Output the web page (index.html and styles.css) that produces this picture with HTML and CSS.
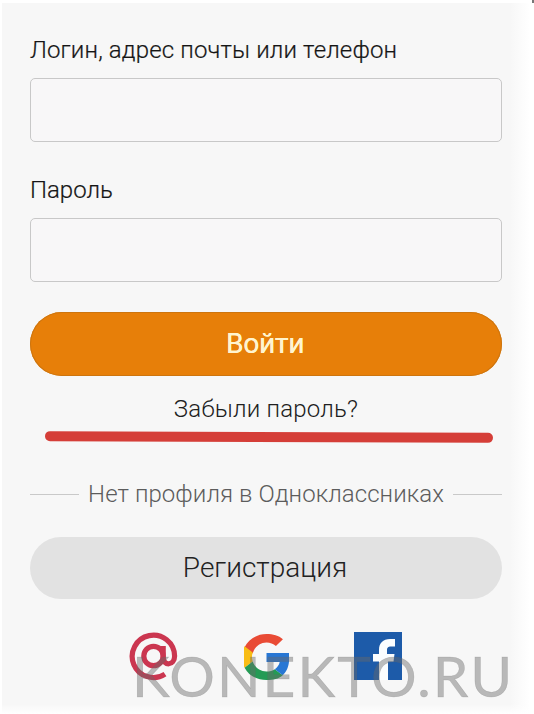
FILE: index.html
```
<!DOCTYPE html>
<html lang="ru">
<head>
<meta charset="utf-8">
<title>Вход</title>
<link rel="stylesheet" href="styles.css">
</head>
<body>
<main class="panel">
  <form class="form">
    <label class="label label-login" for="login">Логин, адрес почты или телефон</label>
    <input class="field" id="login" type="text">
    <label class="label label-password" for="password">Пароль</label>
    <input class="field" id="password" type="password">
    <button class="button button-primary" type="button"><span>Войти</span></button>
    <a class="forgot"><span>Забыли пароль?</span></a>
    <div class="underline"></div>
    <div class="divider"><span>Нет профиля в Одноклассниках</span></div>
    <button class="button button-secondary" type="button"><span>Регистрация</span></button>
  </form>
  <div class="social">
    <svg class="icon-mail" width="50" height="50" viewBox="0 0 50 50" fill="none" stroke="#cb3650" stroke-width="5.2">
      <circle cx="24.500" cy="24" r="9.7"/>
      <path d="M34.200 14V25.500C34.200 34.200 45.600 34 45.600 24A21.200 21.200 0 1 0 36 42.100"/>
    </svg>
    <svg class="icon-google" width="45" height="46" viewBox="2 1 44 46" preserveAspectRatio="none">
      <path fill="#e94b35" d="M24 9.5c3.54 0 6.71 1.22 9.21 3.6l6.85-6.85C35.9 2.38 30.47 1 24 1 14.62 1 6.51 6.38 2.56 14.22l7.98 6.19C12.43 13.72 17.74 9.5 24 9.5z"/>
      <path fill="#f8bd15" d="M10.53 28.59A14.5 14.5 0 0 1 10.53 19.41l-7.98-6.190a24 24 0 0 0 0 21.560z"/>
      <path fill="#249b55" d="M24 47c6.48 0 11.93-1.13 15.89-4.81l-7.73-6c-2.15 1.45-4.92 2.3-8.16 2.3-6.26 0-11.57-4.22-13.47-9.91l-7.98 6.19C6.51 42.62 14.62 47 24 47z"/>
      <path fill="#2877d4" d="M46 20H24v9h12.9c-.58 2.96-2.26 5.48-4.78 7.18l7.73 6C44.36 38 47 31.5 46 20z"/>
    </svg>
    <svg class="icon-facebook" width="48" height="48" viewBox="0 0 48 48">
      <path fill="#1d5ba9" d="M0 0h48v48H0z"/>
      <path fill="#fafdff" d="M25 48V29.500h-6V22h6v-4c0-7 4-11 11-11h5v7.500h-4c-3 0-4 1-4 4V22h7.500l-1 7.500H34V48z"/>
    </svg>
  </div>
  <div class="watermark">KONEKTO.RU</div>
</main>
</body>
</html>
```
FILE: styles.css
```
* { box-sizing: border-box; }
body { margin: 0; background: #fff; overflow: hidden; }
.panel {
  position: relative;
  width: 534px;
  height: 714px;
  padding: 35px 32px 0 28px;
  border-top: 3px solid #fff;
  border-left: 2px solid #fff;
  background: linear-gradient(to right, #f7f7f7 0, #f7f7f7 508px, #fff 528px);
  font-family: Roboto, "Liberation Sans", sans-serif;
  color: #151515;
}
.panel::before {
  content: "";
  position: absolute;
  right: 0; top: -3px;
  width: 2px;
  height: 3px;
  background: #777;
}
.panel::after {
  content: "";
  position: absolute;
  left: 0; right: 0; bottom: 0;
  height: 10px;
  background: linear-gradient(to bottom, transparent, #fff);
}
.form { display: flex; flex-direction: column; width: 472px; }
.label { height: 40px; line-height: 24px; font-size: 24px; font-weight: 300; white-space: nowrap; -webkit-text-stroke: .2px #151515; }
.label-login { letter-spacing: .14px; }
.label-password { margin-top: 36px; }
.field {
  width: 472px;
  height: 64px;
  padding: 0 14px;
  border: 1.500px solid #c8c8c8;
  border-radius: 5px;
  background: #f8f7f8;
}
.button {
  width: 472px;
  height: 64px;
  padding: 0;
  border: 0;
  border-radius: 32px;
  font-family: inherit;
  font-size: 28px;
  line-height: 64px;
}
.button-primary { margin-top: 30px; background: #e77f09; color: #fff4cf; box-shadow: inset 0 0 0 1px #cd750f; }
.button-primary span { margin-right: 2px; letter-spacing: -.2px; text-shadow: .4px 0 #fff4cf; }
.forgot { height: 56px; padding-top: 21px; text-align: center; font-size: 24px; font-weight: 300; line-height: 24px; letter-spacing: .2px; color: #202020; }
.underline { width: 448px; height: 10px; margin-left: 15px; border-radius: 5px; background: #d53e38; transform: rotate(.22deg); }
.divider { display: flex; align-items: center; gap: 9px; height: 30px; margin-top: 37px; font-size: 24px; font-weight: 300; line-height: 30px; letter-spacing: .07px; color: #5c5c5c; white-space: nowrap; }
.divider::before, .divider::after { content: ""; flex: 1; height: 1px; background: #c9c9c9; }
.button-secondary { height: 62px; margin-top: 28px; line-height: 62px; background: #e2e2e2; color: #222; font-weight: 300; }
.button-secondary span { margin-right: 2px; }
.social { display: flex; padding: 33px 0 0 99px; }
.icon-google { margin: 2px 0 0 65px; }
.icon-facebook { margin-left: 65px; }
.watermark {
  position: absolute;
  left: 130px;
  top: 637px;
  font-family: Lato, sans-serif;
  font-size: 57px;
  line-height: 70px;
  letter-spacing: 2px;
  color: rgba(105, 105, 105, .44);
  -webkit-text-stroke: .5px rgba(105, 105, 105, .3);
  white-space: nowrap;
}
```
